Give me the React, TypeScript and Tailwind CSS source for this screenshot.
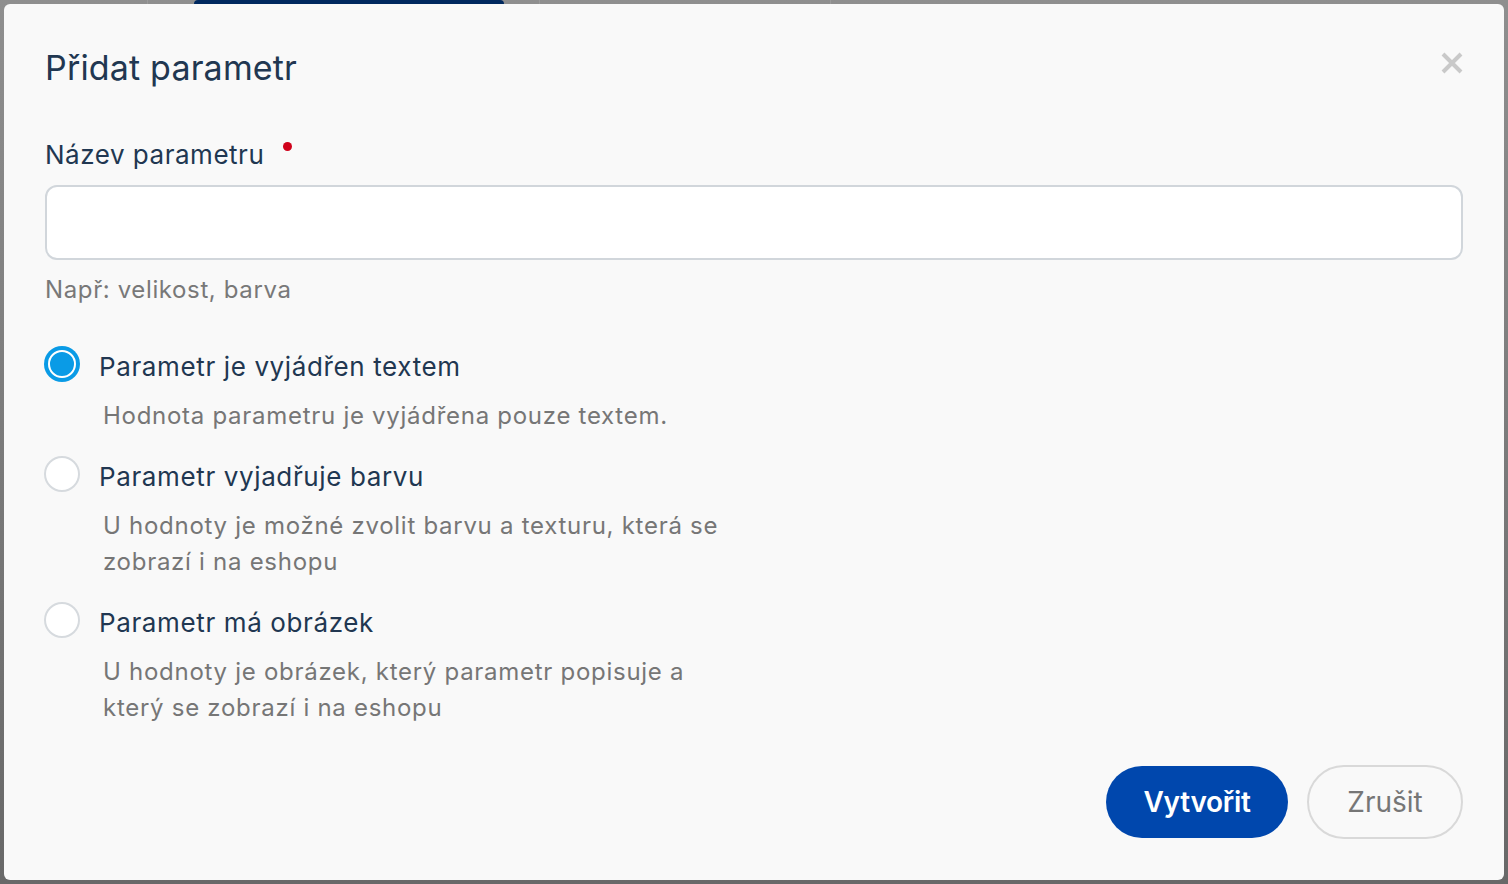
import { useState } from "react";

const options = [
  {
    id: "text",
    title: "Parametr je vyjádřen textem",
    desc: "Hodnota parametru je vyjádřena pouze textem.",
  },
  {
    id: "color",
    title: "Parametr vyjadřuje barvu",
    desc: "U hodnoty je možné zvolit barvu a texturu, která se zobrazí i na eshopu",
  },
  {
    id: "image",
    title: "Parametr má obrázek",
    desc: "U hodnoty je obrázek, který parametr popisuje a který se zobrazí i na eshopu",
  },
];

function Radio({ checked }: { checked: boolean }) {
  if (checked) {
    return (
      <span className="-ml-px flex h-9 w-9 shrink-0 rounded-full bg-[#0a9be6] p-[4px]">
        <span className="h-full w-full rounded-full border-2 border-white bg-[#0a9be6]" />
      </span>
    );
  }
  return <span className="-ml-px h-9 w-9 shrink-0 rounded-full border-2 border-[#d6dade] bg-white" />;
}

export default function App() {
  const [type, setType] = useState("text");

  return (
    <div className="flex h-screen w-full flex-col bg-gradient-to-b from-[#8f8f8f] to-[#686868] font-['Inter','Noto_Sans',sans-serif]">
      {/* page behind the overlay, only the tab strip peeks out */}
      <div className="flex h-[4px] shrink-0">
        <div className="w-[148px] border-r border-[#9b9b9b]" />
        <div className="ml-[46px] w-[310px] rounded-t-md bg-[#00295f]" />
        <div className="ml-[35px] w-[292px] border-l border-r border-[#9b9b9b]" />
      </div>

      <div className="mx-1 mb-1 flex flex-1 flex-col rounded-md bg-[#f9f9f9] px-[41px] pb-[41px] pt-[44px] text-[#213751]">
        <div className="flex items-start justify-between">
          <h1 className="text-[34px] leading-[40px] font-normal tracking-[0.005em]">Přidat parametr</h1>
          <button className="mt-[4px] text-[#c9c9c9]" aria-label="Zavřít">
            <svg width="22" height="22" viewBox="0 0 22 22">
              <path d="M2 2L20 20M20 2L2 20" stroke="currentColor" strokeWidth="4" />
            </svg>
          </button>
        </div>

        <label className="mt-[51px] flex items-start text-[26px] leading-[32px] tracking-[0.02em]">
          Název parametru
          <span className="ml-[19px] mt-[3px] h-[9px] w-[9px] rounded-full bg-[#d0021b]" />
        </label>
        <input
          type="text"
          className="mt-[14px] h-[75px] w-full rounded-xl border-2 border-[#d1d6db] bg-white px-4 text-[24px] outline-none"
        />
        <p className="mt-[14px] text-[24px] leading-[32px] tracking-[0.026em] text-[#787878]">
          Např: velikost, barva
        </p>

        <div className="mt-[40px] flex flex-col gap-[22px]">
          {options.map((o) => (
            <div key={o.id} className="cursor-pointer" onClick={() => setType(o.id)}>
              <div className="flex h-9 items-start gap-[19px]">
                <Radio checked={type === o.id} />
                <span className="mt-[5px] text-[26px] leading-[31px] tracking-[0.024em]">{o.title}</span>
              </div>
              <p className="mt-[16px] max-w-[693px] pl-[58px] text-[24px] leading-[36px] tracking-[0.03em] text-[#767676]">
                {o.desc}
              </p>
            </div>
          ))}
        </div>

        <div className="mt-auto flex items-center justify-end gap-[19px]">
          <button className="h-[72px] w-[182px] rounded-full bg-[#0047ad] text-[28px] font-semibold tracking-[-0.01em] text-white">
            Vytvořit
          </button>
          <button className="h-[74px] w-[156px] rounded-full border-2 border-[#d9d9d9] text-[28px] text-[#767676]">
            Zrušit
          </button>
        </div>
      </div>
    </div>
  );
}
